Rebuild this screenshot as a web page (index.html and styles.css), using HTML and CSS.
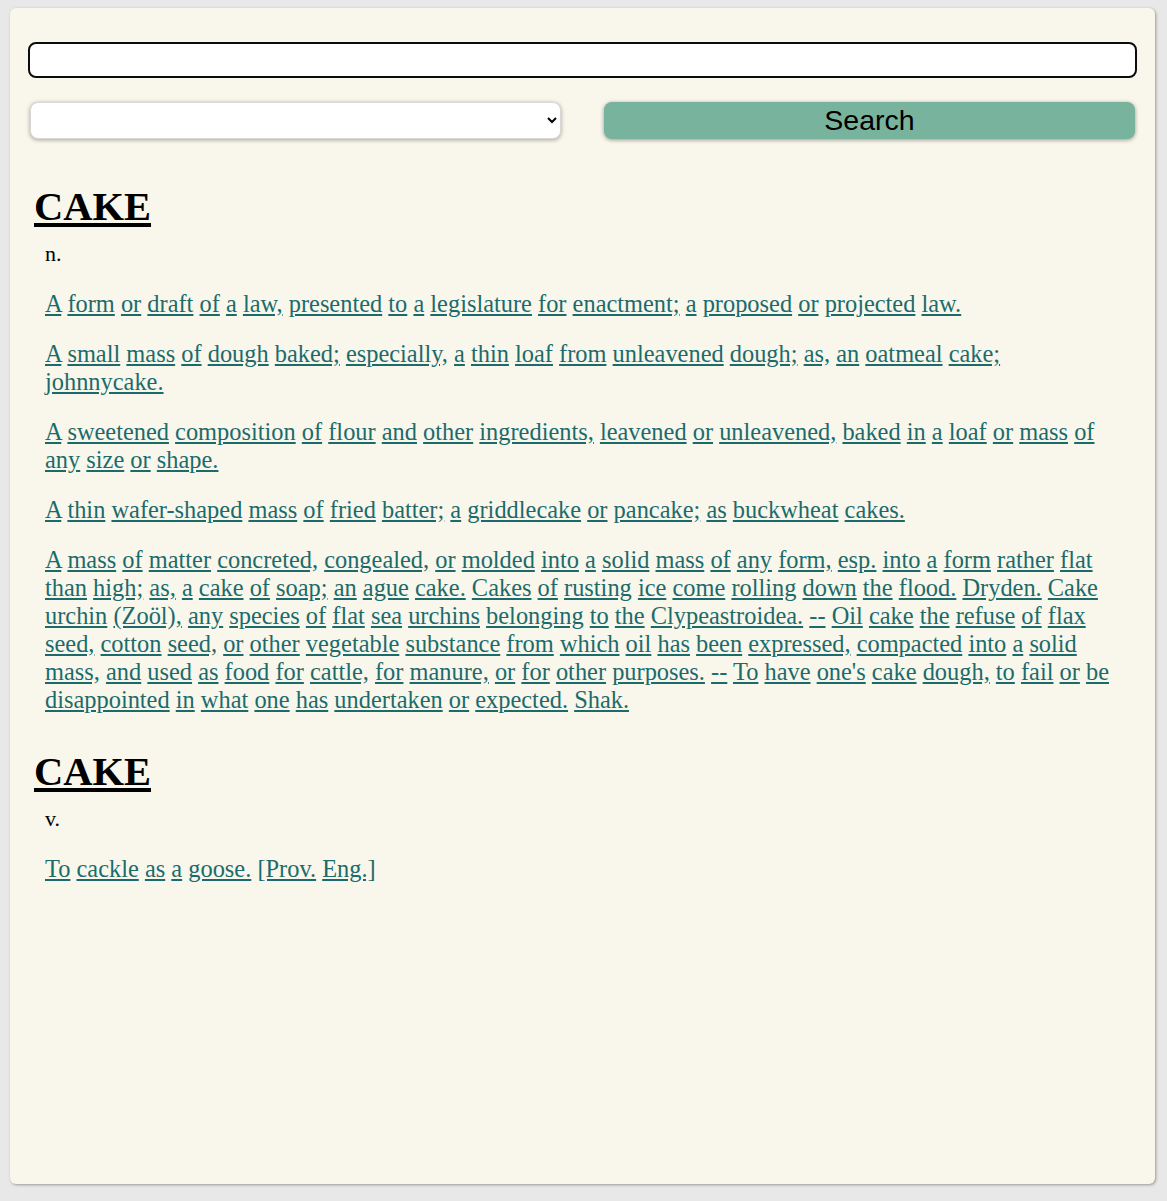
FILE: index.html
```html
<!DOCTYPE html>
<html>
<head>
<meta charset="utf-8">
<link rel="stylesheet" href="styles.css">
</head>
<body>
<div class="card">
  <form class="search">
    <input class="query" type="text">
    <div class="row">
      <select class="source"><option></option></select>
      <button class="go" type="button">Search</button>
    </div>
  </form>
  <div class="results">
    <div class="entry">
      <h1 class="word"><a href="#">CAKE</a></h1>
      <p class="pos">n.</p>
      <p class="def"><a href="#">A</a> <a href="#">form</a> <a href="#">or</a> <a href="#">draft</a> <a href="#">of</a> <a href="#">a</a> <a href="#">law,</a> <a href="#">presented</a> <a href="#">to</a> <a href="#">a</a> <a href="#">legislature</a> <a href="#">for</a> <a href="#">enactment;</a> <a href="#">a</a> <a href="#">proposed</a> <a href="#">or</a> <a href="#">projected</a> <a href="#">law.</a></p>
      <p class="def"><a href="#">A</a> <a href="#">small</a> <a href="#">mass</a> <a href="#">of</a> <a href="#">dough</a> <a href="#">baked;</a> <a href="#">especially,</a> <a href="#">a</a> <a href="#">thin</a> <a href="#">loaf</a> <a href="#">from</a> <a href="#">unleavened</a> <a href="#">dough;</a> <a href="#">as,</a> <a href="#">an</a> <a href="#">oatmeal</a> <a href="#">cake;</a> <a href="#">johnnycake.</a></p>
      <p class="def"><a href="#">A</a> <a href="#">sweetened</a> <a href="#">composition</a> <a href="#">of</a> <a href="#">flour</a> <a href="#">and</a> <a href="#">other</a> <a href="#">ingredients,</a> <a href="#">leavened</a> <a href="#">or</a> <a href="#">unleavened,</a> <a href="#">baked</a> <a href="#">in</a> <a href="#">a</a> <a href="#">loaf</a> <a href="#">or</a> <a href="#">mass</a> <a href="#">of</a> <a href="#">any</a> <a href="#">size</a> <a href="#">or</a> <a href="#">shape.</a></p>
      <p class="def"><a href="#">A</a> <a href="#">thin</a> <a href="#">wafer-shaped</a> <a href="#">mass</a> <a href="#">of</a> <a href="#">fried</a> <a href="#">batter;</a> <a href="#">a</a> <a href="#">griddlecake</a> <a href="#">or</a> <a href="#">pancake;</a> <a href="#">as</a> <a href="#">buckwheat</a> <a href="#">cakes.</a></p>
      <p class="def"><a href="#">A</a> <a href="#">mass</a> <a href="#">of</a> <a href="#">matter</a> <a href="#">concreted,</a> <a href="#">congealed,</a> <a href="#">or</a> <a href="#">molded</a> <a href="#">into</a> <a href="#">a</a> <a href="#">solid</a> <a href="#">mass</a> <a href="#">of</a> <a href="#">any</a> <a href="#">form,</a> <a href="#">esp.</a> <a href="#">into</a> <a href="#">a</a> <a href="#">form</a> <a href="#">rather</a> <a href="#">flat</a> <a href="#">than</a> <a href="#">high;</a> <a href="#">as,</a> <a href="#">a</a> <a href="#">cake</a> <a href="#">of</a> <a href="#">soap;</a> <a href="#">an</a> <a href="#">ague</a> <a href="#">cake.</a> <a href="#">Cakes</a> <a href="#">of</a> <a href="#">rusting</a> <a href="#">ice</a> <a href="#">come</a> <a href="#">rolling</a> <a href="#">down</a> <a href="#">the</a> <a href="#">flood.</a> <a href="#">Dryden.</a> <a href="#">Cake</a> <a href="#">urchin</a> <a href="#">(Zoöl),</a> <a href="#">any</a> <a href="#">species</a> <a href="#">of</a> <a href="#">flat</a> <a href="#">sea</a> <a href="#">urchins</a> <a href="#">belonging</a> <a href="#">to</a> <a href="#">the</a> <a href="#">Clypeastroidea.</a> <a href="#">--</a> <a href="#">Oil</a> <a href="#">cake</a> <a href="#">the</a> <a href="#">refuse</a> <a href="#">of</a> <a href="#">flax</a> <a href="#">seed,</a> <a href="#">cotton</a> <a href="#">seed,</a> <a href="#">or</a> <a href="#">other</a> <a href="#">vegetable</a> <a href="#">substance</a> <a href="#">from</a> <a href="#">which</a> <a href="#">oil</a> <a href="#">has</a> <a href="#">been</a> <a href="#">expressed,</a> <a href="#">compacted</a> <a href="#">into</a> <a href="#">a</a> <a href="#">solid</a> <a href="#">mass,</a> <a href="#">and</a> <a href="#">used</a> <a href="#">as</a> <a href="#">food</a> <a href="#">for</a> <a href="#">cattle,</a> <a href="#">for</a> <a href="#">manure,</a> <a href="#">or</a> <a href="#">for</a> <a href="#">other</a> <a href="#">purposes.</a> <a href="#">--</a> <a href="#">To</a> <a href="#">have</a> <a href="#">one's</a> <a href="#">cake</a> <a href="#">dough,</a> <a href="#">to</a> <a href="#">fail</a> <a href="#">or</a> <a href="#">be</a> <a href="#">disappointed</a> <a href="#">in</a> <a href="#">what</a> <a href="#">one</a> <a href="#">has</a> <a href="#">undertaken</a> <a href="#">or</a> <a href="#">expected.</a> <a href="#">Shak.</a></p>
    </div>
    <div class="entry">
      <h1 class="word"><a href="#">CAKE</a></h1>
      <p class="pos">v.</p>
      <p class="def"><a href="#">To</a> <a href="#">cackle</a> <a href="#">as</a> <a href="#">a</a> <a href="#">goose.</a> <a href="#">[Prov.</a> <a href="#">Eng.]</a></p>
    </div>
  </div>
</div>
</body>
</html>
```
FILE: styles.css
```css
html, body {
  margin: 0;
  padding: 0;
}
body {
  background: #e8e8e8;
  padding: 8px 12px 17px 10px;
  font-family: "Liberation Serif", "Times New Roman", serif;
}
.card {
  background: #f9f7eb;
  border-radius: 6px;
  box-shadow: 1px 1px 3px rgba(0, 0, 0, 0.35);
  height: 1176px;
  box-sizing: border-box;
  padding: 34px 18px 20px 18px;
}
.search {
  margin: 0;
}
.query {
  display: block;
  box-sizing: border-box;
  width: 100%;
  height: 36px;
  margin: 0;
  border: 2px solid #0c0c0c;
  border-radius: 8px;
  background: #fff;
  font-size: 20px;
  font-family: "Liberation Sans", Arial, sans-serif;
}
.row {
  display: grid;
  grid-template-columns: 1fr 1fr;
  column-gap: 43px;
  padding: 0 2px;
  margin-top: 24px;
}
.source {
  height: 37px;
  margin: 0;
  border: 1px solid #d8d8d8;
  border-radius: 8px;
  background: #fff;
  box-shadow: 0 1px 4px rgba(0, 0, 0, 0.35);
  font-family: "Liberation Sans", Arial, sans-serif;
  font-size: 16px;
}
.go {
  height: 37px;
  margin: 0;
  border: none;
  border-radius: 8px;
  background: #77b39d;
  color: #000;
  box-shadow: 0 1px 4px rgba(0, 0, 0, 0.4);
  font-family: "Liberation Sans", Arial, sans-serif;
  font-size: 28.5px;
  line-height: 37px;
  padding: 0;
}
.results {
  padding: 0 19px 0 6px;
  margin-top: 45px;
}
.entry + .entry {
  margin-top: 35px;
}
.word {
  margin: 0;
  font-size: 40.5px;
  font-weight: bold;
  line-height: 46px;
}
.word a {
  color: #000;
  text-decoration: underline;
  text-decoration-thickness: 4px;
  text-underline-offset: 3px;
}
.pos {
  margin: 8px 0 0 11px;
  font-size: 22px;
  line-height: 28px;
  color: #000;
  padding-top: 2px;
}
.def {
  margin: 22px 0 0 11px;
  font-size: 24.4px;
  line-height: 28px;
}
.def a {
  color: #1c6b6c;
  text-decoration: underline;
}
```
